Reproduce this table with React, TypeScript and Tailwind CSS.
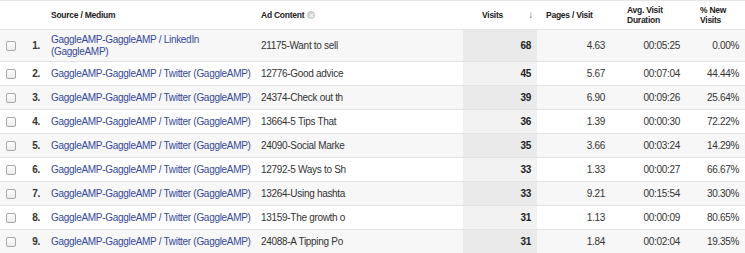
import React from "react";

const rows = [
  ["GaggleAMP-GaggleAMP / LinkedIn (GaggleAMP)", "21175-Want to sell", "68", "4.63", "00:05:25", "0.00%"],
  ["GaggleAMP-GaggleAMP / Twitter (GaggleAMP)", "12776-Good advice", "45", "5.67", "00:07:04", "44.44%"],
  ["GaggleAMP-GaggleAMP / Twitter (GaggleAMP)", "24374-Check out th", "39", "6.90", "00:09:26", "25.64%"],
  ["GaggleAMP-GaggleAMP / Twitter (GaggleAMP)", "13664-5 Tips That", "36", "1.39", "00:00:30", "72.22%"],
  ["GaggleAMP-GaggleAMP / Twitter (GaggleAMP)", "24090-Social Marke", "35", "3.66", "00:03:24", "14.29%"],
  ["GaggleAMP-GaggleAMP / Twitter (GaggleAMP)", "12792-5 Ways to Sh", "33", "1.33", "00:00:27", "66.67%"],
  ["GaggleAMP-GaggleAMP / Twitter (GaggleAMP)", "13264-Using hashta", "33", "9.21", "00:15:54", "30.30%"],
  ["GaggleAMP-GaggleAMP / Twitter (GaggleAMP)", "13159-The growth o", "31", "1.13", "00:00:09", "80.65%"],
  ["GaggleAMP-GaggleAMP / Twitter (GaggleAMP)", "24088-A Tipping Po", "31", "1.84", "00:02:04", "19.35%"],
];

export default function App() {
  return (
    <div className="w-[745px] h-[253px] overflow-hidden bg-white text-[10px] tracking-[-0.3px] text-[#333] font-['Liberation_Sans',Arial,sans-serif]">
      <table className="w-[745px] table-fixed border-collapse border-t border-[#e6e6e6]">
        <colgroup>
          <col className="w-[24px]" />
          <col className="w-[22px]" />
          <col className="w-[210px]" />
          <col className="w-[207px]" />
          <col className="w-[74px]" />
          <col className="w-[75px]" />
          <col className="w-[76px]" />
          <col className="w-[57px]" />
        </colgroup>
        <thead>
          <tr className="h-[29px] text-[8.5px] tracking-[-0.25px] font-bold text-[#222] leading-[10px]">
            <th></th>
            <th></th>
            <th className="text-left pl-[5px]">Source / Medium</th>
            <th className="text-left pl-[5px]">
              <span className="inline-flex items-center gap-[3px]">
                Ad Content
                <span className="inline-flex w-[8px] h-[8px] rounded-full bg-[#cfcfcf] items-center justify-center text-white text-[7px] leading-none">×</span>
              </span>
            </th>
            <th className="text-left pl-[19px]">
              <span className="flex items-center">
                <span>Visits</span>
                <span className="ml-auto mr-[4px] text-[#666] font-normal text-[10px]">↓</span>
              </span>
            </th>
            <th className="text-left pl-[9px]">Pages / Visit</th>
            <th className="text-left pl-[15px]">Avg. Visit<br />Duration</th>
            <th className="text-left pl-[12px]">% New<br />Visits</th>
          </tr>
        </thead>
        <tbody>
          {rows.map((r, i) => {
            const odd = i % 2 === 0;
            return (
              <tr
                key={i}
                className={`${i === 0 ? "h-[32px]" : "h-[24px]"} ${odd ? "bg-[#f7f7f7]" : "bg-white"} border-t border-[#e3e3e3]`}
              >
                <td className="pl-[6px]">
                  <span className="block w-[10px] h-[10px] rounded-[2px] border border-[#a8a8a8] bg-gradient-to-b from-white to-[#ececec]"></span>
                </td>
                <td className="text-right pr-[6px] font-bold text-[#333]">{i + 1}.</td>
                <td className="pl-[5px] text-[#34479b] leading-[12px] whitespace-nowrap overflow-hidden">
                  {i === 0 ? (
                    <>
                      GaggleAMP-GaggleAMP / LinkedIn
                      <br />
                      (GaggleAMP)
                    </>
                  ) : (
                    r[0]
                  )}
                </td>
                <td className="pl-[5px] whitespace-nowrap">{r[1]}</td>
                <td className={`text-right pr-[6px] font-bold text-[#222] ${odd ? "bg-[#eaeaea]" : "bg-[#f2f2f2]"}`}>{r[2]}</td>
                <td className="text-right pr-[7px]">{r[3]}</td>
                <td className="text-right pr-[8px]">{r[4]}</td>
                <td className="text-right pr-[6px]">{r[5]}</td>
              </tr>
            );
          })}
        </tbody>
      </table>
    </div>
  );
}
